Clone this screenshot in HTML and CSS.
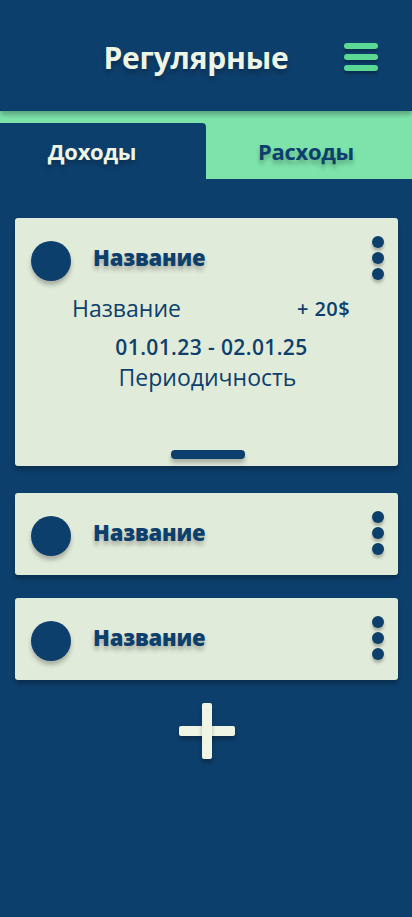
FILE: index.html
```html
<!DOCTYPE html>
<html lang="ru">
<head>
<meta charset="utf-8">
<title>Регулярные</title>
<link rel="stylesheet" href="styles.css">
</head>
<body>
<header class="topbar">
  <h1 class="topbar__title">Регулярные</h1>
  <button class="burger" aria-label="Меню">
    <span class="burger__line"></span>
    <span class="burger__line"></span>
    <span class="burger__line"></span>
  </button>
</header>
<nav class="tabs">
  <div class="tab tab--active">Доходы</div>
  <div class="tab">Расходы</div>
</nav>
<main class="list">
  <section class="card card--expanded">
    <div class="card__row">
      <div class="card__avatar"></div>
      <div class="card__title">Название</div>
      <div class="dots"><span class="dot"></span><span class="dot"></span><span class="dot"></span></div>
    </div>
    <div class="card__details">
      <div class="card__line">
        <span class="card__name">Название</span>
        <span class="card__sum">+ 20$</span>
      </div>
      <div class="card__dates">01.01.23 - 02.01.25</div>
      <div class="card__period">Периодичность</div>
    </div>
    <div class="card__handle"></div>
  </section>
  <section class="card">
    <div class="card__row">
      <div class="card__avatar"></div>
      <div class="card__title">Название</div>
      <div class="dots"><span class="dot"></span><span class="dot"></span><span class="dot"></span></div>
    </div>
  </section>
  <section class="card">
    <div class="card__row">
      <div class="card__avatar"></div>
      <div class="card__title">Название</div>
      <div class="dots"><span class="dot"></span><span class="dot"></span><span class="dot"></span></div>
    </div>
  </section>
  <button class="add" aria-label="Добавить">
    <span class="add__h"></span>
    <span class="add__v"></span>
  </button>
</main>
</body>
</html>
```
FILE: styles.css
```css
* { box-sizing: border-box; }
html, body {
  margin: 0;
  padding: 0;
}
body {
  background: #0d3f6d;
  font-family: "Open Sans", "Noto Sans", sans-serif;
  color: #0d3f6d;
  min-height: 917px;
}
.topbar {
  position: relative;
  z-index: 2;
  height: 111px;
  background: #0d3f6d;
  border-radius: 0 0 4px 4px;
  box-shadow: 0 4px 4px rgba(0, 0, 0, 0.25);
  display: flex;
  align-items: center;
  padding: 0 34px 0 48px;
}
.topbar__title {
  flex: 1;
  margin: 0;
  text-align: center;
  font-size: 30px;
  font-weight: 700;
  letter-spacing: -0.2px;
  color: #eef5e4;
  text-shadow: 0 4px 4px rgba(0, 0, 0, 0.25);
  line-height: 1;
  padding-top: 4px;
}
.burger {
  width: 34px;
  padding: 0;
  margin: 2px 0 0 0;
  border: 0;
  background: none;
  display: flex;
  flex-direction: column;
  gap: 5px;
}
.burger__line {
  display: block;
  height: 6px;
  border-radius: 3px;
  background: #5bd894;
  box-shadow: 0 3px 3px rgba(0, 0, 0, 0.25);
}
.tabs {
  position: relative;
  z-index: 1;
  display: flex;
  align-items: flex-end;
  height: 68px;
  background: #7de3aa;
  padding-top: 12px;
}
.tab {
  flex: 1;
  height: 56px;
  display: flex;
  align-items: center;
  justify-content: center;
  font-size: 22px;
  font-weight: 700;
  color: #0d3f6d;
  text-shadow: 0 4px 4px rgba(0, 0, 0, 0.25);
  padding: 0 6px 0 0;
  letter-spacing: -0.3px;
}
.tab--active {
  flex: 0 0 206px;
  background: #0d3f6d;
  color: #eef5e4;
  border-radius: 0 4px 0 0;
  padding: 0 22px 0 0;
}
.list {
  padding: 39px 14px 0 15px;
  display: flex;
  flex-direction: column;
  gap: 23px;
}
.card {
  background: #e1ebda;
  border-radius: 3px;
  box-shadow: 0 4px 4px rgba(0, 0, 0, 0.25);
  padding: 18px 14px 19px 16px;
}
.card--expanded {
  height: 248px;
  margin-bottom: 4px;
  display: flex;
  flex-direction: column;
  padding-bottom: 7px;
}
.card__row {
  display: flex;
  align-items: flex-start;
}
.card__avatar {
  flex: 0 0 40px;
  width: 40px;
  height: 40px;
  margin-top: 5px;
  border-radius: 50%;
  background: #0d3f6d;
  box-shadow: 0 4px 4px rgba(0, 0, 0, 0.25);
}
.card__title {
  flex: 1;
  margin-left: 22px;
  margin-top: 6px;
  font-size: 22px;
  font-weight: 800;
  line-height: 30px;
  letter-spacing: -0.2px;
  text-shadow: 0 4px 4px rgba(0, 0, 0, 0.25);
}
.dots {
  display: flex;
  flex-direction: column;
  gap: 4px;
}
.dot {
  display: block;
  width: 12px;
  height: 12px;
  border-radius: 50%;
  background: #0d3f6d;
  box-shadow: 0 3px 3px rgba(0, 0, 0, 0.25);
}
.card__details {
  margin-top: 13px;
}
.card__line {
  display: flex;
  justify-content: space-between;
  align-items: center;
  padding: 0 34px 0 41px;
  height: 28px;
}
.card__name {
  font-size: 23px;
  font-weight: 400;
}
.card__sum {
  font-size: 20px;
  font-weight: 600;
  letter-spacing: 0.4px;
}
.card__dates {
  margin-top: 11px;
  padding-left: 8px;
  text-align: center;
  font-size: 21px;
  font-weight: 600;
  letter-spacing: 0.4px;
  line-height: 28px;
}
.card__period {
  margin-top: 2px;
  text-align: center;
  font-size: 23px;
  line-height: 28px;
}
.card__handle {
  margin: auto auto 0;
  width: 74px;
  height: 9px;
  border-radius: 4px;
  background: #0d3f6d;
  box-shadow: 0 4px 4px rgba(0, 0, 0, 0.25);
}
.add {
  position: relative;
  align-self: center;
  width: 56px;
  height: 56px;
  margin-top: 0;
  padding: 0;
  border: 0;
  background: none;
}
.add__h, .add__v {
  position: absolute;
  background: #eef5e4;
  border-radius: 2px;
  box-shadow: 0 4px 4px rgba(0, 0, 0, 0.25);
}
.add__h {
  left: 0;
  right: 0;
  top: 23px;
  height: 10px;
}
.add__v {
  top: 0;
  bottom: 0;
  left: 23px;
  width: 10px;
}
```
